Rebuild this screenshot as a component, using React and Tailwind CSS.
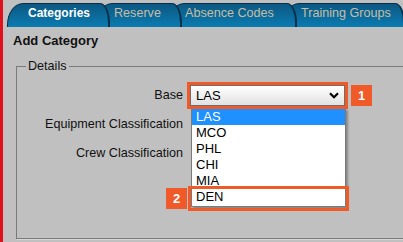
function Tab({ children, className, active }) {
  return (
    <div
      className={`relative h-[24px] shrink-0 border border-b-0 border-r-2 border-[#08304a] rounded-tl-[16px_22px] rounded-tr-[10px_20px] bg-linear-to-b from-[#0c5882] to-[#0a7cb2] pt-[2px] leading-[14px] whitespace-nowrap ${
        active ? "text-white font-bold text-[12px]" : "text-[#c5bea6] text-[12.6px]"
      } ${className}`}
    >
      {children}
    </div>
  );
}

function Badge({ children, className }) {
  return (
    <div
      className={`flex items-center justify-center w-[21px] h-[21px] bg-[#f05a28] text-white font-bold text-[13px] leading-none ${className}`}
    >
      {children}
    </div>
  );
}

export default function App() {
  const opts = ["LAS", "MCO", "PHL", "CHI", "MIA", "DEN"];
  return (
    <div className="w-[403px] h-[242px] overflow-hidden bg-[#c0c0c0] border-l-[3px] border-[#e0101c] font-['Liberation_Sans',Arial,sans-serif] text-[#111]">
      <div className="flex pt-[3px] pl-[4px] h-[27px]">
        <Tab active className="w-[103px] pl-[20px] z-[4]">Categories</Tab>
        <Tab className="-ml-[14px] w-[86px] pl-[17px] z-[3]">Reserve</Tab>
        <Tab className="-ml-[14px] w-[129px] pl-[16px] z-[2]">Absence Codes</Tab>
        <Tab className="-ml-[14px] w-[122px] pl-[17px] z-[1]">Training Groups</Tab>
      </div>

      <div className="pl-[10px] pt-[6px] text-[13px] font-bold leading-[15px]">Add Category</div>

      <fieldset className="mt-[11px] ml-[13px] w-[400px] h-[180px] border border-[#7a7a7a] pl-[9px] pt-[8px] shadow-[1px_1px_0_#d6d6d6]">
        <legend className="px-[2px] text-[12.6px] leading-[15px]">Details</legend>

        <div className="flex items-center h-[27px]">
          <div className="w-[157px] text-right text-[12.6px]">Base</div>
          <div className="relative ml-[4px] z-[2]">
            <div className="relative z-[3] w-[161px] h-[27px] border-[3px] border-[#f05a28]">
              <div className="h-[21px] border border-[#6e6e6e] bg-linear-to-b from-white to-[#e2e2e2] flex items-center pl-[5px] text-[13px] text-black">
                <span>LAS</span>
                <svg width="10" height="7" viewBox="0 0 10 7" className="ml-auto mr-[5px]">
                  <path d="M1 1.3 L5 5.3 L9 1.3" fill="none" stroke="#000" strokeWidth="2.2" />
                </svg>
              </div>
            </div>
            <div className="absolute left-[4px] top-[26px] w-[155px] bg-white border border-[#7a7a7a] pb-[1px] shadow-[2px_2px_2px_rgba(0,0,0,0.3)] text-[13px] leading-[16px]">
              {opts.map((o, i) => (
                <div
                  key={o}
                  className={`h-[16px] pl-[4px] ${i === 0 ? "bg-[#1e90ff] text-white" : "text-black"}`}
                >
                  {o}
                </div>
              ))}
              <div className="absolute -left-[4px] top-[77px] w-[161px] h-[25px] border-[3px] border-[#f05a28]" />
              <Badge className="absolute -left-[26px] top-[79px]">2</Badge>
            </div>
          </div>
          <Badge className="ml-[3px]">1</Badge>
        </div>

        <div className="flex items-center h-[30px]">
          <div className="w-[157px] text-right text-[12.6px]">Equipment Classification</div>
        </div>
        <div className="flex items-center h-[29px]">
          <div className="w-[157px] text-right text-[12.6px]">Crew Classification</div>
        </div>
      </fieldset>
    </div>
  );
}
